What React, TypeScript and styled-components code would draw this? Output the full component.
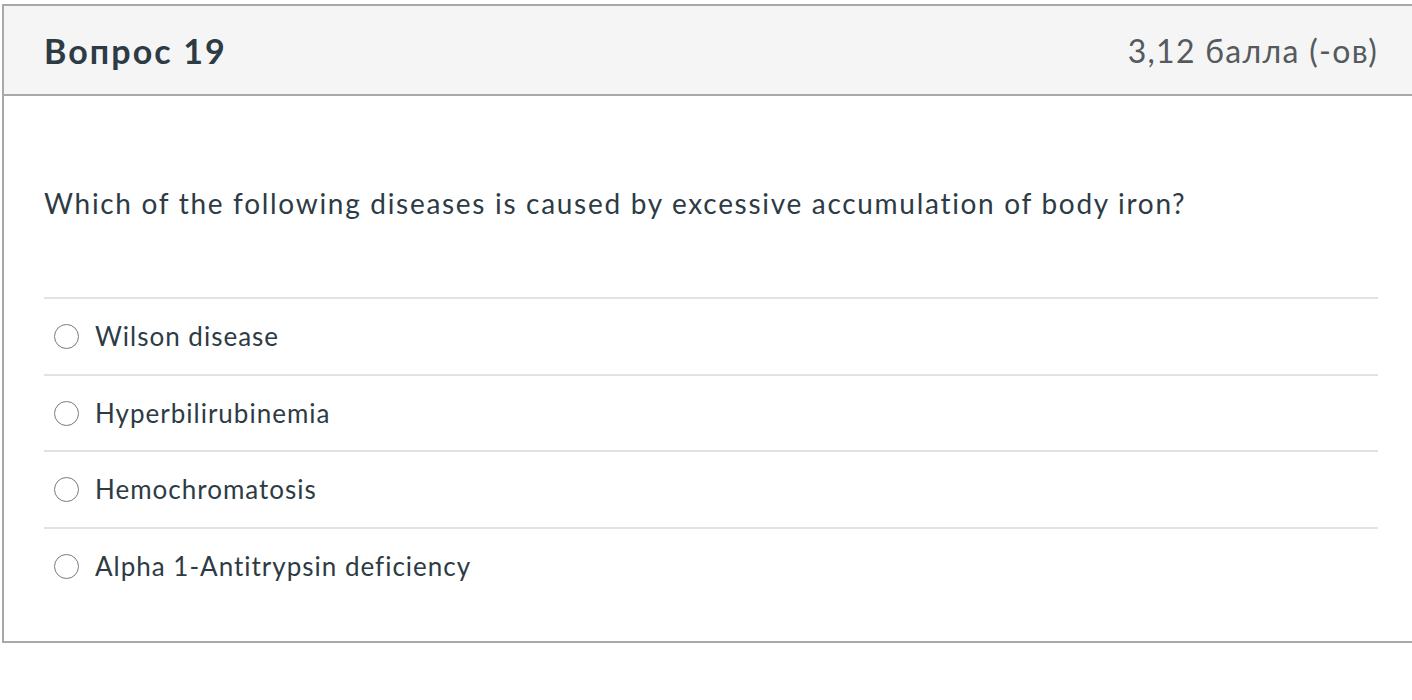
import styled, { createGlobalStyle } from "styled-components";

const GlobalStyle = createGlobalStyle`
  html, body {
    margin: 0;
    padding: 0;
    background: #ffffff;
    overflow: hidden;
  }
  body {
    font-family: Lato, "Liberation Sans", sans-serif;
  }
`;

const answers = [
  "Wilson disease",
  "Hyperbilirubinemia",
  "Hemochromatosis",
  "Alpha 1-Antitrypsin deficiency",
];

const Page = styled.div`
  padding: 4px 0 0 2px;
  width: 1430px;
`;

const Card = styled.section`
  border: 2px solid #a8a8a8;
  background: #ffffff;
`;

const Header = styled.header`
  display: flex;
  justify-content: space-between;
  align-items: center;
  height: 88px;
  padding: 0 52px 0 40px;
  background: #f5f5f5;
  border-bottom: 2px solid #a8a8a8;
`;

const Title = styled.h2`
  margin: 0;
  font-size: 34px;
  font-weight: 700;
  letter-spacing: 2.1px;
  color: #2d3b45;
`;

const Points = styled.span`
  font-size: 32px;
  letter-spacing: 1.3px;
  color: #555a5e;
`;

const Body = styled.div`
  padding: 91px 52px 38px 40px;
`;

const Question = styled.p`
  margin: 0 0 78px;
  font-size: 28px;
  line-height: 32px;
  letter-spacing: 1.7px;
  color: #2d3b45;
`;

const AnswerList = styled.div`
  display: flex;
  flex-direction: column;
`;

const Answer = styled.label`
  display: flex;
  align-items: center;
  gap: 16px;
  height: 74.5px;
  padding-left: 10px;
  border-top: 2px solid #e2e2e2;
  font-size: 26px;
  letter-spacing: 1px;
  color: #2d3b45;
  cursor: pointer;
`;

const Radio = styled.span`
  width: 25px;
  height: 25px;
  border: 1.5px solid #7a7a7a;
  border-radius: 50%;
  box-sizing: border-box;
  background: #fff;
  flex-shrink: 0;
  margin-top: 1px;
`;

export default function App() {
  return (
    <>
      <GlobalStyle />
      <Page>
        <Card>
          <Header>
            <Title>Вопрос 19</Title>
            <Points>3,12 балла (-ов)</Points>
          </Header>
          <Body>
            <Question>
              Which of the following diseases is caused by excessive accumulation of body iron?
            </Question>
            <AnswerList>
              {answers.map((a) => (
                <Answer key={a}>
                  <Radio />
                  {a}
                </Answer>
              ))}
            </AnswerList>
          </Body>
        </Card>
      </Page>
    </>
  );
}
